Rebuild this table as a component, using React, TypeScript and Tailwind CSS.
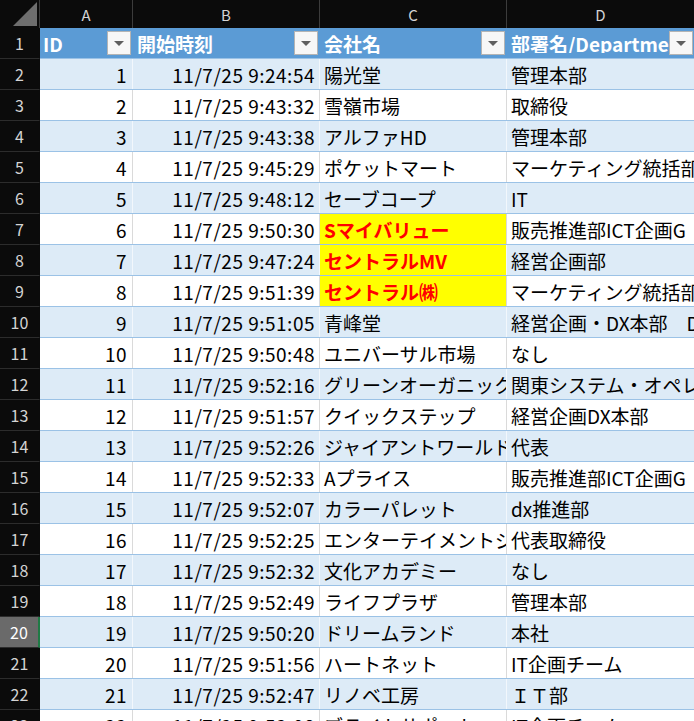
type Entry = {
  id: number;
  time: string;
  company: string;
  dept: string;
  mark?: boolean;
};

const entries: Entry[] = [
  { id: 1, time: '11/7/25 9:24:54', company: '陽光堂', dept: '管理本部' },
  { id: 2, time: '11/7/25 9:43:32', company: '雪嶺市場', dept: '取締役' },
  { id: 3, time: '11/7/25 9:43:38', company: 'アルファHD', dept: '管理本部' },
  { id: 4, time: '11/7/25 9:45:29', company: 'ポケットマート', dept: 'マーケティング統括部' },
  { id: 5, time: '11/7/25 9:48:12', company: 'セーブコープ', dept: 'IT' },
  { id: 6, time: '11/7/25 9:50:30', company: 'Sマイバリュー', dept: '販売推進部ICT企画G', mark: true },
  { id: 7, time: '11/7/25 9:47:24', company: 'セントラルMV', dept: '経営企画部', mark: true },
  { id: 8, time: '11/7/25 9:51:39', company: 'セントラル㈱', dept: 'マーケティング統括部', mark: true },
  { id: 9, time: '11/7/25 9:51:05', company: '青峰堂', dept: '経営企画・DX本部　DX推進室' },
  { id: 10, time: '11/7/25 9:50:48', company: 'ユニバーサル市場', dept: 'なし' },
  { id: 11, time: '11/7/25 9:52:16', company: 'グリーンオーガニック', dept: '関東システム・オペレーション部' },
  { id: 12, time: '11/7/25 9:51:57', company: 'クイックステップ', dept: '経営企画DX本部' },
  { id: 13, time: '11/7/25 9:52:26', company: 'ジャイアントワールド', dept: '代表' },
  { id: 14, time: '11/7/25 9:52:33', company: 'Aプライス', dept: '販売推進部ICT企画G' },
  { id: 15, time: '11/7/25 9:52:07', company: 'カラーパレット', dept: 'dx推進部' },
  { id: 16, time: '11/7/25 9:52:25', company: 'エンターテイメントジャパン', dept: '代表取締役' },
  { id: 17, time: '11/7/25 9:52:32', company: '文化アカデミー', dept: 'なし' },
  { id: 18, time: '11/7/25 9:52:49', company: 'ライフプラザ', dept: '管理本部' },
  { id: 19, time: '11/7/25 9:50:20', company: 'ドリームランド', dept: '本社' },
  { id: 20, time: '11/7/25 9:51:56', company: 'ハートネット', dept: 'IT企画チーム' },
  { id: 21, time: '11/7/25 9:52:47', company: 'リノベ工房', dept: 'ＩＴ部' },
  { id: 22, time: '11/7/25 9:53:08', company: 'ブライトサポート', dept: 'IT企画チーム' },
];

function FilterButton() {
  return (
    <div className="ml-auto mr-[1px] flex h-[24px] w-[24px] shrink-0 items-center justify-center border border-[#b4b4b4] bg-[#f7f7f7]">
      <svg width="10" height="5" viewBox="0 0 10 5">
        <polygon points="0,0 10,0 5,5" fill="#5f5f5f" />
      </svg>
    </div>
  );
}

function RowHead({ n, active }: { n: number; active?: boolean }) {
  if (active) {
    return (
      <div className="flex w-[40px] shrink-0 items-center justify-center border-r-2 border-b border-r-[#1f7a45] border-b-[#2c2c2c] bg-[#6a6a6a] text-[16px] text-white">
        {n}
      </div>
    );
  }
  return (
    <div className="flex w-[40px] shrink-0 items-center justify-center border-r border-b border-r-[#0b0b0b] border-b-[#2c2c2c] bg-[#0b0b0b] text-[16px] text-[#d4d4d4]">
      {n}
    </div>
  );
}

function DataRow({ row }: { row: Entry }) {
  const band = row.id % 2 === 1;
  const line = band ? 'border-[#f2f7fc]' : 'border-[#dadada]';
  return (
    <div className="flex h-[31px] shrink-0">
      <RowHead n={row.id + 1} active={row.id === 19} />
      <div className={`flex min-w-0 flex-1 border-b border-b-[#9bc2e6] ${band ? 'bg-[#ddebf7]' : 'bg-white'}`}>
        <div className={`flex w-[93px] shrink-0 items-center justify-end border-r pr-[5px] tracking-[0.4px] ${line}`}>
          {row.id}
        </div>
        <div className={`flex w-[187px] shrink-0 items-center justify-end border-r pr-[4px] tracking-[0.5px] ${line}`}>
          {row.time}
        </div>
        <div
          className={`flex w-[187px] shrink-0 items-center overflow-hidden whitespace-nowrap border-r pl-[4px] ${line} ${
            row.mark ? 'bg-[#ffff00] font-bold text-[#ff0000]' : ''
          }`}
        >
          {row.company}
        </div>
        <div className="flex min-w-0 flex-1 items-center overflow-hidden whitespace-nowrap pl-[4px]">{row.dept}</div>
      </div>
    </div>
  );
}

export default function App() {
  return (
    <div className="flex h-[721px] w-[694px] flex-col overflow-hidden bg-white font-['Noto_Sans_CJK_JP',sans-serif] text-[19px] leading-none text-black">
      {/* column letters */}
      <div className="flex h-[28px] shrink-0 bg-[#0b0b0b] text-[15px] text-[#d4d4d4]">
        <div className="flex w-[40px] shrink-0 items-end justify-end border-r border-[#3c3c3c] pr-[2px] pb-[2px]">
          <svg width="24" height="24" viewBox="0 0 24 24">
            <polygon points="0,24 24,24 24,0" fill="#6e6e6e" />
          </svg>
        </div>
        <div className="flex w-[93px] shrink-0 items-center justify-center border-r border-[#3c3c3c]">A</div>
        <div className="flex w-[187px] shrink-0 items-center justify-center border-r border-[#3c3c3c]">B</div>
        <div className="flex w-[187px] shrink-0 items-center justify-center border-r border-[#3c3c3c]">C</div>
        <div className="flex min-w-0 flex-1 items-center justify-center">D</div>
      </div>

      {/* table header */}
      <div className="flex h-[31px] shrink-0">
        <RowHead n={1} />
        <div className="flex min-w-0 flex-1 border-b border-b-[#9bc2e6] bg-[#5b9bd5] font-bold text-white">
          <div className="flex w-[93px] shrink-0 items-center border-r border-[#5b9bd5] pl-[3px]">
            ID
            <FilterButton />
          </div>
          <div className="flex w-[187px] shrink-0 items-center border-r border-[#5b9bd5] pl-[4px]">
            開始時刻
            <FilterButton />
          </div>
          <div className="flex w-[187px] shrink-0 items-center border-r border-[#5b9bd5] pl-[4px]">
            会社名
            <FilterButton />
          </div>
          <div className="flex min-w-0 flex-1 items-center pl-[4px]">
            <span className="min-w-0 flex-1 overflow-hidden whitespace-nowrap">部署名/Department</span>
            <FilterButton />
          </div>
        </div>
      </div>

      {entries.map((row) => (
        <DataRow key={row.id} row={row} />
      ))}
    </div>
  );
}
